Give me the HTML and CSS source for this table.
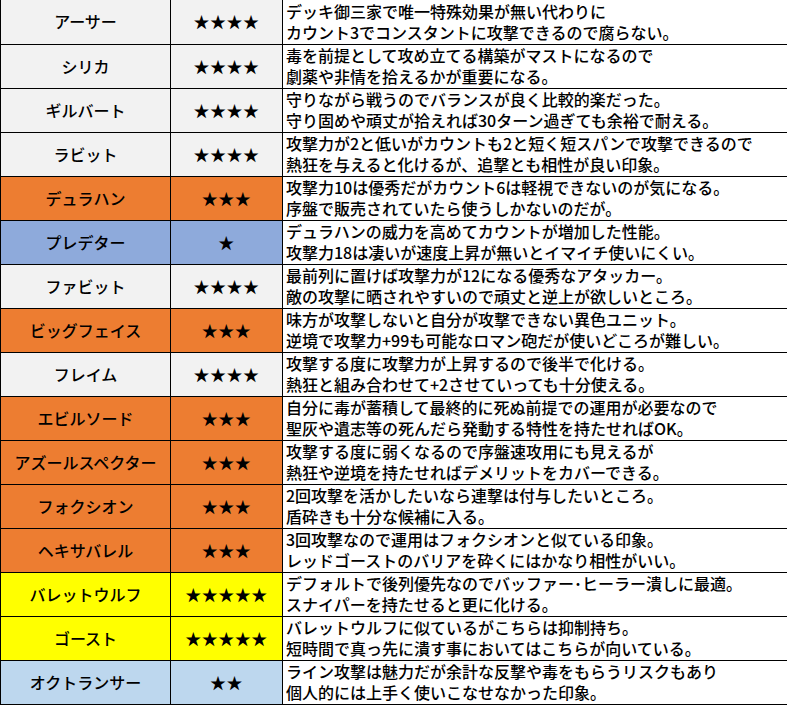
FILE: index.html
```html
<!DOCTYPE html>
<html lang="ja">
<head>
<meta charset="utf-8">
<link rel="stylesheet" href="styles.css">
</head>
<body>
<table class="tier">
<colgroup><col class="c-name"><col class="c-rank"><col class="c-desc"></colgroup>
<tbody>
<tr class="gray"><td class="name">アーサー</td><td class="rank">★★★★</td><td class="desc">デッキ御三家で唯一特殊効果が無い代わりに<br>カウント3でコンスタントに攻撃できるので腐らない。</td></tr>
<tr class="gray"><td class="name">シリカ</td><td class="rank">★★★★</td><td class="desc">毒を前提として攻め立てる構築がマストになるので<br>劇薬や非情を拾えるかが重要になる。</td></tr>
<tr class="gray"><td class="name">ギルバート</td><td class="rank">★★★★</td><td class="desc">守りながら戦うのでバランスが良く比較的楽だった。<br>守り固めや頑丈が拾えれば30ターン過ぎても余裕で耐える。</td></tr>
<tr class="gray"><td class="name">ラビット</td><td class="rank">★★★★</td><td class="desc">攻撃力が2と低いがカウントも2と短く短スパンで攻撃できるので<br>熱狂を与えると化けるが、追撃とも相性が良い印象。</td></tr>
<tr class="orange"><td class="name">デュラハン</td><td class="rank">★★★</td><td class="desc">攻撃力10は優秀だがカウント6は軽視できないのが気になる。<br>序盤で販売されていたら使うしかないのだが。</td></tr>
<tr class="blue"><td class="name">プレデター</td><td class="rank">★</td><td class="desc">デュラハンの威力を高めてカウントが増加した性能。<br>攻撃力18は凄いが速度上昇が無いとイマイチ使いにくい。</td></tr>
<tr class="gray"><td class="name">ファビット</td><td class="rank">★★★★</td><td class="desc">最前列に置けば攻撃力が12になる優秀なアタッカー。<br>敵の攻撃に晒されやすいので頑丈と逆上が欲しいところ。</td></tr>
<tr class="orange"><td class="name">ビッグフェイス</td><td class="rank">★★★</td><td class="desc">味方が攻撃しないと自分が攻撃できない異色ユニット。<br>逆境で攻撃力+99も可能なロマン砲だが使いどころが難しい。</td></tr>
<tr class="gray"><td class="name">フレイム</td><td class="rank">★★★★</td><td class="desc">攻撃する度に攻撃力が上昇するので後半で化ける。<br>熱狂と組み合わせて+2させていっても十分使える。</td></tr>
<tr class="orange"><td class="name">エビルソード</td><td class="rank">★★★</td><td class="desc">自分に毒が蓄積して最終的に死ぬ前提での運用が必要なので<br>聖灰や遺志等の死んだら発動する特性を持たせればOK。</td></tr>
<tr class="orange"><td class="name">アズールスペクター</td><td class="rank">★★★</td><td class="desc">攻撃する度に弱くなるので序盤速攻用にも見えるが<br>熱狂や逆境を持たせればデメリットをカバーできる。</td></tr>
<tr class="orange"><td class="name">フォクシオン</td><td class="rank">★★★</td><td class="desc">2回攻撃を活かしたいなら連撃は付与したいところ。<br>盾砕きも十分な候補に入る。</td></tr>
<tr class="orange"><td class="name">ヘキサバレル</td><td class="rank">★★★</td><td class="desc">3回攻撃なので運用はフォクシオンと似ている印象。<br>レッドゴーストのバリアを砕くにはかなり相性がいい。</td></tr>
<tr class="yellow"><td class="name">バレットウルフ</td><td class="rank">★★★★★</td><td class="desc">デフォルトで後列優先なのでバッファー･ヒーラー潰しに最適。<br>スナイパーを持たせると更に化ける。</td></tr>
<tr class="yellow"><td class="name">ゴースト</td><td class="rank">★★★★★</td><td class="desc">バレットウルフに似ているがこちらは抑制持ち。<br>短時間で真っ先に潰す事においてはこちらが向いている。</td></tr>
<tr class="lblue"><td class="name">オクトランサー</td><td class="rank">★★</td><td class="desc">ライン攻撃は魅力だが余計な反撃や毒をもらうリスクもあり<br>個人的には上手く使いこなせなかった印象。</td></tr>
</tbody>
</table>
</body>
</html>
```
FILE: styles.css
```css
html, body {
  margin: 0;
  padding: 0;
  background: #ffffff;
}
body {
  font-family: "Noto Sans CJK JP", "Noto Sans", sans-serif;
  color: #000000;
}
.tier {
  border-collapse: collapse;
  table-layout: fixed;
  width: 787px;
}
.c-name { width: 170px; }
.c-rank { width: 112px; }
.c-desc { width: 505px; }
.tier tr { height: 44px; }
.tier td {
  border: 1px solid #000000;
  padding: 0;
  vertical-align: middle;
  font-size: 16px;
  line-height: 21px;
  white-space: nowrap;
  font-weight: 500;
}
.tier tr:first-child td { border-top: none; }
.name, .rank { text-align: center; }
.name { font-size: 16.5px; }
.rank { font-size: 17px; letter-spacing: 0.5px; }
.desc { padding-left: 3px !important; background: #ffffff; }
.gray .name, .gray .rank { background: #f2f2f2; }
.orange .name, .orange .rank { background: #ed7d31; }
.blue .name, .blue .rank { background: #8eaadb; }
.yellow .name, .yellow .rank { background: #ffff00; }
.lblue .name, .lblue .rank { background: #bdd7ee; }
```
